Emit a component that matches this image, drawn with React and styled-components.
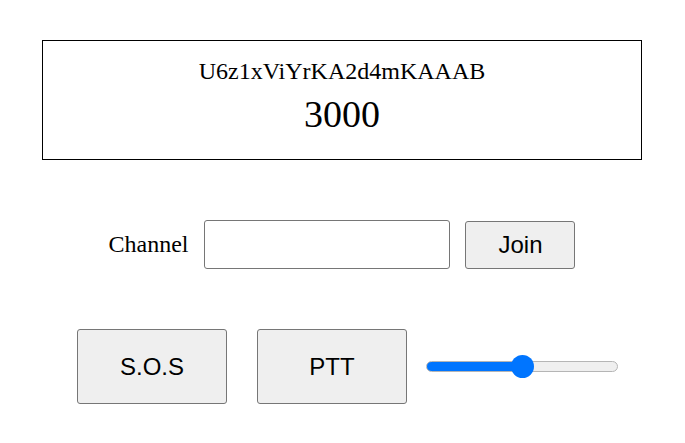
import React, { useState } from 'react';
import styled, { createGlobalStyle } from 'styled-components';

const GlobalStyle = createGlobalStyle`
  html, body {
    margin: 0;
    padding: 0;
    background: #fff;
  }
  body {
    font-family: "Liberation Serif", "Times New Roman", serif;
    color: #000;
  }
`;

const Page = styled.div`
  padding: 40px 1px 0 0;
  display: flex;
  flex-direction: column;
  align-items: center;
`;

const InfoBox = styled.div`
  box-sizing: border-box;
  width: 600px;
  height: 120px;
  border: 1px solid #000;
  padding-top: 16px;
  display: flex;
  flex-direction: column;
  align-items: center;
`;

const UserId = styled.div`
  font-size: 24px;
  line-height: 28px;
`;

const Counter = styled.div`
  margin-top: 8px;
  font-size: 38px;
  line-height: 42px;
`;

const ChannelRow = styled.div`
  margin-top: 60px;
  display: flex;
  align-items: center;
  gap: 16px;
`;

const Label = styled.label`
  font-size: 24px;
`;

const ChannelInput = styled.input`
  box-sizing: border-box;
  width: 246px;
  height: 49px;
  border: 1px solid #767676;
  border-radius: 3px;
  padding: 0 8px;
  font-family: "Liberation Sans", Arial, sans-serif;
  font-size: 24px;
  margin-right: -1px;
`;

const Button = styled.button`
  box-sizing: border-box;
  width: ${(p) => p.$w}px;
  height: ${(p) => p.$h}px;
  background: #efefef;
  border: 1px solid #767676;
  border-radius: 3px;
  font-family: "Liberation Sans", Arial, sans-serif;
  font-size: 24px;
  color: #000;
  padding: 0;
  cursor: pointer;
`;

const ControlRow = styled.div`
  align-self: stretch;
  margin-top: 60px;
  padding-left: 77px;
  display: flex;
  align-items: center;
  gap: 30px;
`;

const Volume = styled.input`
  -webkit-appearance: none;
  appearance: none;
  width: 192px;
  height: 23px;
  margin: 0 0 0 -11px;
  background: transparent;

  &::-webkit-slider-runnable-track {
    box-sizing: border-box;
    height: 11px;
    border-radius: 6px;
    border: 1px solid #b5b5b5;
    background: linear-gradient(to right, #0075ff ${(p) => p.$pct}%, #efefef ${(p) => p.$pct}%);
  }

  &::-webkit-slider-thumb {
    -webkit-appearance: none;
    width: 23px;
    height: 23px;
    border-radius: 50%;
    background: #0075ff;
    border: none;
    margin-top: -7px;
  }
`;

const App = () => {
  const [volume, setVolume] = useState(50);
  const fill = (11.5 + (volume / 100) * 169) / 192 * 100;

  return (
    <>
      <GlobalStyle />
      <Page>
        <InfoBox>
          <UserId>U6z1xViYrKA2d4mKAAAB</UserId>
          <Counter>3000</Counter>
        </InfoBox>
        <ChannelRow>
          <Label htmlFor="channel">Channel</Label>
          <ChannelInput id="channel" type="text" />
          <Button $w={110} $h={48}>Join</Button>
        </ChannelRow>
        <ControlRow>
          <Button $w={150} $h={75}>S.O.S</Button>
          <Button $w={150} $h={75}>PTT</Button>
          <Volume
            type="range"
            min="0"
            max="100"
            value={volume}
            $pct={fill}
            onChange={(e) => setVolume(Number(e.target.value))}
          />
        </ControlRow>
      </Page>
    </>
  );
};

export default App;
